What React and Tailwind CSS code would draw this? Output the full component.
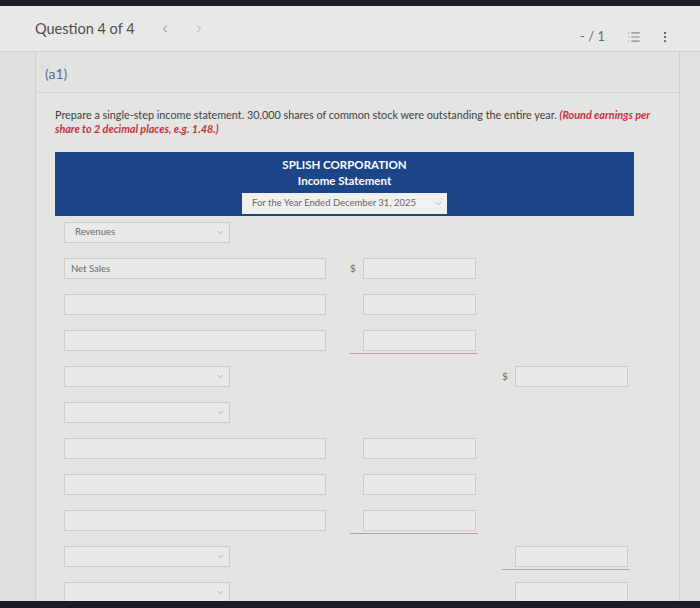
import { ChevronDown, ChevronLeft, ChevronRight, EllipsisVertical, List } from "lucide-react";

const Field = ({ text }) => (
  <div className="w-[262px] h-[21px] border border-[#cbcbc9] bg-[#e9e9e7] px-[6px] text-[9.5px] leading-[19px] text-[#6b6b6b]">
    {text}
  </div>
);

const Select = ({ text }) => (
  <div className="w-[166px] h-[21px] border border-[#cbcbc9] bg-[#e9e9e7] pl-[10px] pr-[4px] flex items-center justify-between text-[9.5px] text-[#6b6b6b]">
    <span>{text}</span>
    <ChevronDown size={9} className="text-[#9a9a9a]" />
  </div>
);

// amount cell, optional dollar sign and underline below it
const Amount = ({ dollar, line, col = 2 }) => (
  <div
    className={`${col === 2 ? "col-start-2" : "col-start-3"} w-[128px] flex items-start ${
      line ? (col === 2 ? "h-[24px] border-b border-[#b89a9a]" : "h-[24px] border-b border-[#a8a8a8]") : ""
    }`}
  >
    <span className="w-[13px] text-[10px] leading-[21px] text-[#6b6b6b]">{dollar ? "$" : ""}</span>
    <div className="w-[113px] h-[21px] border border-[#cbcbc9] bg-[#e9e9e7]" />
  </div>
);

const Row = ({ children }) => (
  <div className="h-[21px] grid grid-cols-[262px_128px_128px] gap-x-[24px] items-start pl-[9px]">{children}</div>
);

export default function App() {
  return (
    <div className="w-[700px] h-[608px] overflow-hidden flex flex-col bg-[#dededc] font-['Lato','Liberation_Sans',sans-serif]">
      <div className="h-[6px] bg-[#1b1d26] shrink-0" />

      {/* top bar */}
      <div className="h-[46px] shrink-0 bg-[#e8e8e6] border-b border-[#cfcfcd] flex items-start px-[35px]">
        <div className="pt-[12px] flex items-center">
          <span className="text-[14.5px] text-[#4d4d4d]">Question 4 of 4</span>
          <ChevronLeft size={12} className="ml-[24px] text-[#777]" />
          <ChevronRight size={12} className="ml-[22px] text-[#aaa]" />
        </div>
        <div className="ml-auto pt-[21px] flex items-center mr-[-7px]">
          <span className="text-[13px] text-[#666]">- / 1</span>
          <List size={14} className="ml-[22px] text-[#8a8a8a]" />
          <EllipsisVertical size={14} className="ml-[17px] text-[#666]" />
        </div>
      </div>

      <div className="flex-1 flex min-h-0">
        <div className="w-[35px] shrink-0 bg-[#dfdfdd]" />
        <div className="w-[645px] shrink-0 border-l border-r border-[#cfcfcd] bg-[#e4e4e2] flex flex-col">
          <div className="h-[41px] shrink-0 border-b border-[#d2d2d0] bg-[#e2e2e0] px-[9px] pt-[11px] text-[14px] text-[#5d6d85]">
            (a1)
          </div>
          <div className="pl-[19px] pt-[15px]">
            <p className="w-[600px] text-[10.8px] leading-[14px] text-[#3f3f3f]">
              <span>Prepare a single-step income statement. 30,000 shares of common stock were outstanding the entire year. </span>
              <span className="font-bold italic text-[#c63042]">(Round earnings per</span>
              <br />
              <span className="font-bold italic text-[#c63042]">share to 2 decimal places, e.g. 1.48.)</span>
            </p>

            <div className="mt-[16px] w-[579px] h-[64px] bg-[#1c4688] flex flex-col items-center pt-[5px]">
              <div className="text-[11.5px] leading-[16px] font-bold text-white">SPLISH CORPORATION</div>
              <div className="text-[11.5px] leading-[16px] font-bold text-white">Income Statement</div>
              <div className="mt-[4px] w-[205px] h-[21px] bg-[#f1f1ef] flex items-center justify-between pl-[10px] pr-[4px] text-[9.5px] text-[#666]">
                <span>For the Year Ended December 31, 2025</span>
                <ChevronDown size={9} className="text-[#999]" />
              </div>
            </div>

            <div className="mt-[6px] flex flex-col gap-[15px]">
              <Row>
                <Select text="Revenues" />
              </Row>
              <Row>
                <Field text="Net Sales" />
                <Amount dollar />
              </Row>
              <Row>
                <Field />
                <Amount />
              </Row>
              <Row>
                <Field />
                <Amount line />
              </Row>
              <Row>
                <Select />
                <Amount dollar col={3} />
              </Row>
              <Row>
                <Select />
              </Row>
              <Row>
                <Field />
                <Amount />
              </Row>
              <Row>
                <Field />
                <Amount />
              </Row>
              <Row>
                <Field />
                <Amount line />
              </Row>
              <Row>
                <Select />
                <Amount col={3} line />
              </Row>
              <Row>
                <Select />
                <Amount col={3} />
              </Row>
            </div>
          </div>
        </div>
        <div className="flex-1 bg-[#e0e0de]" />
      </div>

      <div className="h-[7px] bg-[#1b1d26] shrink-0" />
    </div>
  );
}
